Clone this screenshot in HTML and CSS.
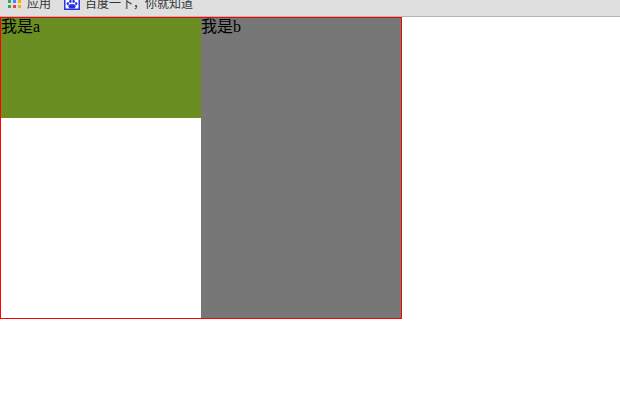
FILE: index.html
```html
<!DOCTYPE html>
<html lang="zh">
<head>
  <meta charset="UTF-8">
  <title>float</title>
  <link rel="stylesheet" href="styles.css">
</head>
<body>
  <!-- Bookmarks bar -->
  <div class="bookmarks">
    <div class="bookmark">
      <svg class="apps-icon" width="13" height="8" viewBox="0 0 13 8">
        <rect x="0" y="0" width="3" height="3" fill="#34a853"/>
        <rect x="5" y="0" width="3" height="3" fill="#4285f4"/>
        <rect x="10" y="0" width="3" height="3" fill="#fbac05"/>
        <rect x="0" y="5" width="3" height="3" fill="#34a853"/>
        <rect x="5" y="5" width="3" height="3" fill="#ea4335"/>
        <rect x="10" y="5" width="3" height="3" fill="#fbac05"/>
      </svg>
      <span>应用</span>
    </div>
    <div class="bookmark baidu">
      <svg class="paw-icon" width="16" height="16" viewBox="0 0 16 16">
        <rect x="0.75" y="0.75" width="14.5" height="14.5" fill="#fff" stroke="#2932e1" stroke-width="1.5"/>
        <ellipse cx="8" cy="12.2" rx="3.6" ry="2.3" fill="#2932e1"/>
        <ellipse cx="3.8" cy="9.6" rx="1.2" ry="1.7" fill="#2932e1"/>
        <ellipse cx="6.4" cy="7.4" rx="1.2" ry="1.7" fill="#2932e1"/>
        <ellipse cx="9.6" cy="7.4" rx="1.2" ry="1.7" fill="#2932e1"/>
        <ellipse cx="12.2" cy="9.6" rx="1.2" ry="1.7" fill="#2932e1"/>
      </svg>
      <span>百度一下，你就知道</span>
    </div>
  </div>

  <!-- Demo -->
  <div class="box">
    <div class="a">我是a</div>
    <div class="b">我是b</div>
  </div>
</body>
</html>
```

FILE: styles.css
```css
body {
  margin: 0;
  background-color: #fff;
  font-family: "Liberation Serif", "Noto Sans CJK SC", serif;
  font-size: 16px;
  color: #000;
}
.bookmarks {
  height: 16px;
  background-color: #dfdfdf;
  border-bottom: 1px solid #b5b5b5;
  display: flex;
  align-items: flex-end;
  padding-left: 8px;
  gap: 13px;
  overflow: hidden;
  font-family: "Noto Sans CJK SC", sans-serif;
  font-size: 12px;
  color: #333;
}
.bookmark {
  display: flex;
  align-items: flex-end;
  gap: 6px;
  line-height: 18px;
}
.baidu {
  gap: 5px;
}
.bookmark span {
  margin-bottom: 4px;
}
.apps-icon {
  margin-bottom: 8px;
}
.paw-icon {
  margin-bottom: 6px;
}
.box {
  width: 400px;
  height: 300px;
  border: 1px solid red;
  display: flex;
  align-items: flex-start;
}
.a {
  width: 200px;
  height: 100px;
  line-height: 18px;
  background-color: #6b8e23;
}
.b {
  width: 200px;
  height: 300px;
  line-height: 18px;
  background-color: #777;
}
```
